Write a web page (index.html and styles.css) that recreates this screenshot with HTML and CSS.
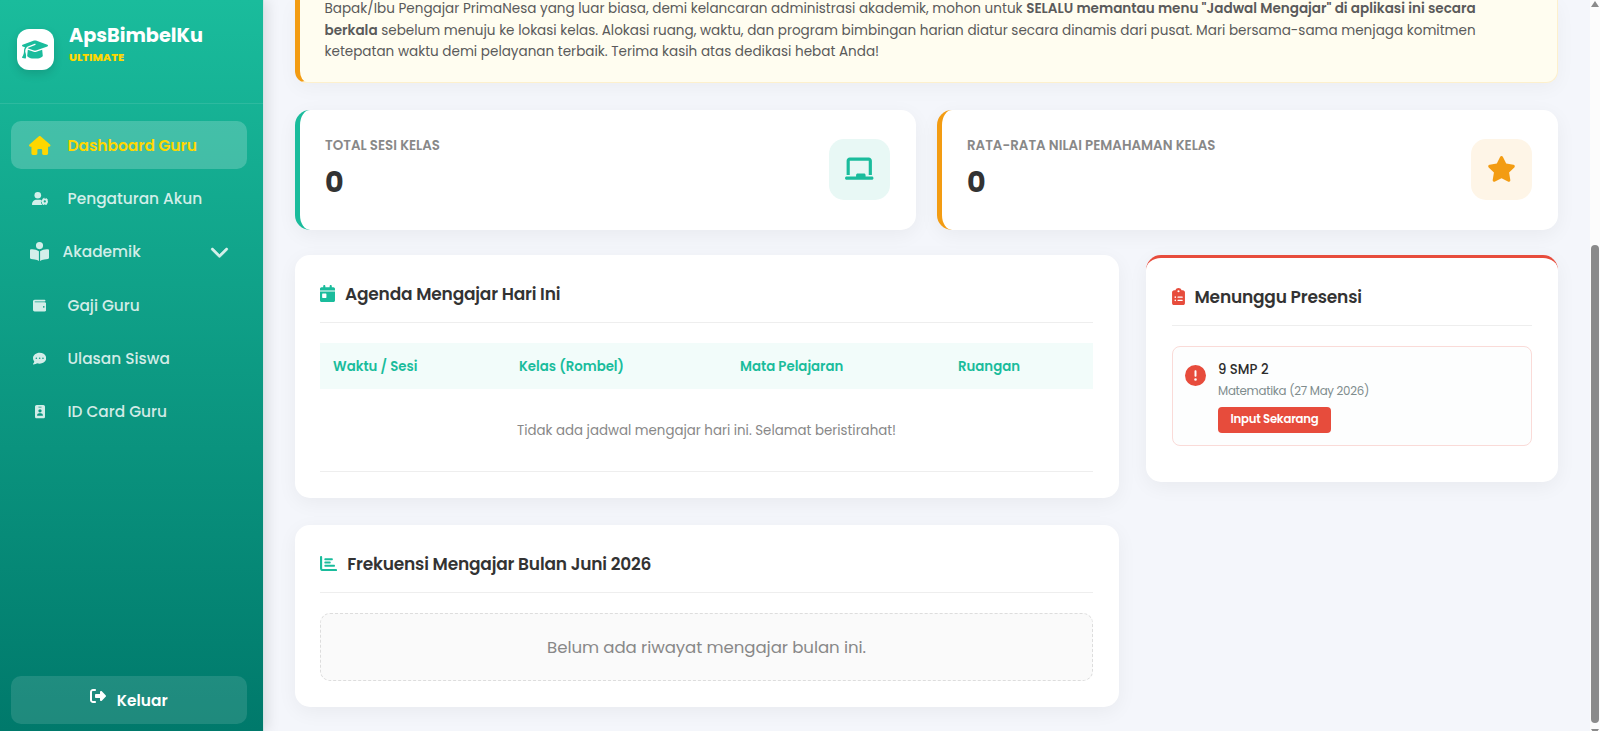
FILE: index.html
```
<!DOCTYPE html>
<html lang="id">
<head>
<meta charset="utf-8">
<title>Dashboard Guru - ApsBimbelKu</title>
<link rel="stylesheet" href="styles.css">
</head>
<body>
<div class="app">
  <aside class="sidebar">
    <div class="brand">
      <div class="brand-logo"><svg viewBox="0 0 640 512"><path d="M320 32c-8.1 0-16.1 1.4-23.7 4.1L15.8 137.4C6.3 140.9 0 149.9 0 160s6.3 19.1 15.8 22.6l57.9 20.9C57.3 229.3 48 259.8 48 291.9v28.1c0 28.4-10.8 57.7-22.3 80.8c-6.5 13-13.9 25.8-22.5 37.6C0 442.7-.9 448.3 .9 453.4s6 8.9 11.2 10.2l64 16c4.2 1.1 8.7 .3 12.4-2s6.3-6.1 7.1-10.4c8.6-42.8 4.3-81.2-2.1-108.7C90.3 344.3 86 329.8 80 316.5V291.9c0-30.2 10.2-58.7 27.9-81.5c12.9-15.5 29.6-28 49.2-35.7l157-61.7c8.2-3.2 17.5 .8 20.7 9s-.8 17.5-9 20.7l-157 61.7c-12.4 4.9-23.3 12.4-32.2 21.6l159.6 57.6c7.6 2.7 15.6 4.1 23.7 4.1s16.1-1.4 23.7-4.1L624.2 182.6c9.5-3.4 15.8-12.5 15.8-22.6s-6.3-19.1-15.8-22.6L343.7 36.1C336.1 33.4 328.1 32 320 32zM128 408c0 35.3 86 72 192 72s192-36.7 192-72L496.7 262.6 354.5 314c-11.1 4-22.8 6-34.5 6s-23.5-2-34.5-6L143.3 262.6 128 408z"/></svg></div>
      <div class="brand-text">
        <div class="brand-name">ApsBimbelKu</div>
        <div class="brand-tier">ULTIMATE</div>
      </div>
    </div>
    <nav class="menu">
      <a class="menu-item active"><span class="menu-icon"><svg class="i-home" viewBox="0 0 576 512"><path d="M575.8 255.5c0 18-15 32.1-32 32.1h-32l.7 160.2c0 2.7-.2 5.4-.5 8.1V472c0 22.1-17.9 40-40 40H456c-1.1 0-2.2 0-3.3-.1c-1.4 .1-2.8 .1-4.2 .1H416 392c-22.1 0-40-17.9-40-40V448 384c0-17.7-14.3-32-32-32H256c-17.7 0-32 14.3-32 32v64 24c0 22.1-17.9 40-40 40H160 128.1c-1.5 0-3-.1-4.5-.2c-1.2 .1-2.4 .2-3.6 .2H104c-22.1 0-40-17.9-40-40V360c0-.9 0-1.9 .1-2.8V287.6H32c-18 0-32-14-32-32.1c0-9 3-17 10-24L266.4 8c7-7 15-8 22-8s15 2 21 7L564.8 231.5c8 7 12 15 11 24z"/></svg></span><span>Dashboard Guru</span></a>
      <a class="menu-item"><span class="menu-icon"><svg class="i-user" viewBox="0 0 640 512"><circle cx="224" cy="128" r="128"/><path d="M178 304C80 304 0 384 0 482c0 17 13 30 30 30h390c-42-28-70-72-74-122-4-32 2-58 14-78-28-6-58-8-90-8z"/><circle cx="496" cy="368" r="82" fill="none" stroke="currentColor" stroke-width="76"/><circle cx="496" cy="368" r="128" fill="none" stroke="currentColor" stroke-width="34" stroke-dasharray="74 60" stroke-dashoffset="37"/></svg></span><span>Pengaturan Akun</span></a>
      <a class="menu-item group"><span class="menu-icon"><svg class="i-book" viewBox="0 0 512 512"><path d="M160 96a96 96 0 1 1 192 0A96 96 0 1 1 160 96zm80 152V512l-48.4-24.2c-20.9-10.4-43.5-17-66.8-19.3l-96-9.6C12.5 457.2 0 443.5 0 427V224c0-17.7 14.3-32 32-32H62.3c63.6 0 125.6 19.6 177.7 56zm32 264V248c52.1-36.4 114.1-56 177.7-56H480c17.7 0 32 14.3 32 32V427c0 16.4-12.5 30.2-28.8 31.8l-96 9.6c-23.2 2.3-45.9 8.9-66.8 19.3L272 512z"/></svg></span><span>Akademik</span><svg class="i-chevron" viewBox="0 0 512 512"><path d="M233.4 406.6c12.5 12.5 32.8 12.5 45.3 0l192-192c12.5-12.5 12.5-32.8 0-45.3s-32.8-12.5-45.3 0L256 338.7 86.6 169.4c-12.5-12.5-32.8-12.5-45.3 0s-12.5 32.8 0 45.3l192 192z"/></svg></a>
      <a class="menu-item"><span class="menu-icon"><svg class="i-small" viewBox="0 0 512 512"><path d="M64 32C28.7 32 0 60.7 0 96V416c0 35.3 28.7 64 64 64H448c35.3 0 64-28.7 64-64V192c0-35.3-28.7-64-64-64H80c-8.8 0-16-7.2-16-16s7.2-16 16-16H448c17.7 0 32-14.3 32-32s-14.3-32-32-32H64zM416 272a32 32 0 1 1 0 64 32 32 0 1 1 0-64z"/></svg></span><span>Gaji Guru</span></a>
      <a class="menu-item"><span class="menu-icon"><svg class="i-small" viewBox="0 0 512 512"><path d="M256 448c141.4 0 256-93.1 256-208S397.4 32 256 32S0 125.1 0 240c0 45.1 17.7 86.8 47.7 120.9c-1.9 24.5-11.4 46.3-21.4 62.9c-5.5 9.2-11.1 16.6-15.2 21.6c-2.1 2.5-3.7 4.4-4.9 5.7l-1.6 1.7c-4.6 4.6-5.9 11.4-3.4 17.4c2.5 6 8.3 9.9 14.8 9.9c28.7 0 57.6-8.9 81.6-19.3c22.9-10 42.4-21.9 54.3-30.6c31.8 11.5 67 17.9 104.1 17.9zM128 208a32 32 0 1 1 0 64 32 32 0 1 1 0-64zm128 0a32 32 0 1 1 0 64 32 32 0 1 1 0-64zm96 32a32 32 0 1 1 64 0 32 32 0 1 1 -64 0z"/></svg></span><span>Ulasan Siswa</span></a>
      <a class="menu-item"><span class="menu-icon"><svg class="i-badge" viewBox="0 0 384 512"><path d="M64 0C28.7 0 0 28.7 0 64V448c0 35.3 28.7 64 64 64H320c35.3 0 64-28.7 64-64V64c0-35.3-28.7-64-64-64H64zm96 320h64c44.2 0 80 35.8 80 80c0 8.8-7.2 16-16 16H96c-8.8 0-16-7.2-16-16c0-44.2 35.8-80 80-80zm-32-96a64 64 0 1 1 128 0 64 64 0 1 1 -128 0zM144 64h96c8.8 0 16 7.2 16 16s-7.2 16-16 16H144c-8.8 0-16-7.2-16-16s7.2-16 16-16z"/></svg></span><span>ID Card Guru</span></a>
    </nav>
    <a class="logout"><svg viewBox="0 0 512 512"><path d="M377.9 105.9L500.7 228.7c7.2 7.2 11.3 17.1 11.3 27.3s-4.1 20.1-11.3 27.3L377.9 406.1c-6.4 6.4-15 9.9-24 9.9c-18.7 0-33.9-15.2-33.9-33.9l0-62.1-128 0c-17.7 0-32-14.3-32-32l0-64c0-17.7 14.3-32 32-32l128 0 0-62.1c0-18.7 15.2-33.9 33.9-33.9c9 0 17.6 3.6 24 9.9zM160 96L96 96c-17.7 0-32 14.3-32 32l0 256c0 17.7 14.3 32 32 32l64 0c17.7 0 32 14.3 32 32s-14.3 32-32 32l-64 0c-53 0-96-43-96-96L0 128C0 75 43 32 96 32l64 0c17.7 0 32 14.3 32 32s-14.3 32-32 32z"/></svg><span>Keluar</span></a>
  </aside>

  <main class="content">
    <section class="notice">
      <div class="notice-line">Bapak/Ibu Pengajar PrimaNesa yang luar biasa, demi kelancaran administrasi akademik, mohon untuk <b>SELALU memantau menu "Jadwal Mengajar" di aplikasi ini secara</b></div>
      <div class="notice-line"><b>berkala</b> sebelum menuju ke lokasi kelas. Alokasi ruang, waktu, dan program bimbingan harian diatur secara dinamis dari pusat. Mari bersama-sama menjaga komitmen</div>
      <div class="notice-line">ketepatan waktu demi pelayanan terbaik. Terima kasih atas dedikasi hebat Anda!</div>
    </section>

    <section class="stats">
      <div class="stat stat-green">
        <div class="stat-body">
          <div class="stat-label">TOTAL SESI KELAS</div>
          <div class="stat-value">0</div>
        </div>
        <div class="stat-icon"><svg class="i-board" viewBox="0 0 576 512"><path d="M96 32C60.7 32 32 60.7 32 96V384H96V96l384 0V384h64V96c0-35.3-28.7-64-64-64H96zM224 384v32H32c-17.7 0-32 14.3-32 32s14.3 32 32 32H544c17.7 0 32-14.3 32-32s-14.3-32-32-32H416V384c0-17.7-14.3-32-32-32H256c-17.7 0-32 14.3-32 32z"/></svg></div>
      </div>
      <div class="stat stat-orange">
        <div class="stat-body">
          <div class="stat-label">RATA-RATA NILAI PEMAHAMAN KELAS</div>
          <div class="stat-value">0</div>
        </div>
        <div class="stat-icon"><svg class="i-star" viewBox="0 0 576 512"><path d="M316.9 18C311.6 7 300.4 0 288.1 0s-23.4 7-28.8 18L195 150.3 51.4 171.5c-12 1.8-22 10.2-25.7 21.7s-.7 24.2 7.9 32.7L137.8 329 113.2 474.7c-2 12 3 24.2 12.9 31.3s23 8 33.8 2.3l128.3-68.5 128.3 68.5c10.8 5.7 23.9 4.9 33.8-2.3s14.9-19.3 12.9-31.3L438.5 329 542.7 225.9c8.6-8.5 11.7-21.2 7.9-32.7s-13.7-19.9-25.7-21.7L381.2 150.3 316.9 18z"/></svg></div>
      </div>
    </section>

    <div class="columns">
      <div class="col">
        <section class="card card-agenda">
          <h2 class="card-title"><svg class="i-cal" viewBox="0 0 448 512"><path d="M128 0c17.7 0 32 14.3 32 32V64H288V32c0-17.7 14.3-32 32-32s32 14.3 32 32V64h48c26.5 0 48 21.5 48 48v48H0V112C0 85.5 21.5 64 48 64H96V32c0-17.7 14.3-32 32-32zM0 192H448V464c0 26.5-21.5 48-48 48H48c-26.5 0-48-21.5-48-48V192zm80 64c-8.8 0-16 7.2-16 16v96c0 8.8 7.2 16 16 16h96c8.8 0 16-7.2 16-16V272c0-8.8-7.2-16-16-16H80z"/></svg><span>Agenda Mengajar Hari Ini</span></h2>
          <div class="table">
            <div class="thead"><span>Waktu / Sesi</span><span>Kelas (Rombel)</span><span>Mata Pelajaran</span><span>Ruangan</span></div>
            <div class="trow">Tidak ada jadwal mengajar hari ini. Selamat beristirahat!</div>
          </div>
        </section>
        <section class="card card-freq">
          <h2 class="card-title"><svg class="i-chart" viewBox="0 0 512 512"><path d="M32 32c17.7 0 32 14.3 32 32V400c0 8.8 7.2 16 16 16H480c17.7 0 32 14.3 32 32s-14.3 32-32 32H80c-44.2 0-80-35.8-80-80V64C0 46.3 14.3 32 32 32zm96 96c0-17.7 14.3-32 32-32l192 0c17.7 0 32 14.3 32 32s-14.3 32-32 32l-192 0c-17.7 0-32-14.3-32-32zm32 64H288c17.7 0 32 14.3 32 32s-14.3 32-32 32H160c-17.7 0-32-14.3-32-32s14.3-32 32-32zm0 96H416c17.7 0 32 14.3 32 32s-14.3 32-32 32H160c-17.7 0-32-14.3-32-32s14.3-32 32-32z"/></svg><span>Frekuensi Mengajar Bulan Juni 2026</span></h2>
          <div class="empty">Belum ada riwayat mengajar bulan ini.</div>
        </section>
      </div>
      <section class="card card-presensi">
        <h2 class="card-title"><svg class="i-clip" viewBox="0 0 384 512"><path d="M192 0c-41.8 0-77.4 26.7-90.5 64H64C28.7 64 0 92.7 0 128V448c0 35.3 28.7 64 64 64H320c35.3 0 64-28.7 64-64V128c0-35.3-28.7-64-64-64H282.5C269.4 26.7 233.8 0 192 0zm0 64a32 32 0 1 1 0 64 32 32 0 1 1 0-64zM72 272a24 24 0 1 1 48 0 24 24 0 1 1 -48 0zm104-16H304c8.8 0 16 7.2 16 16s-7.2 16-16 16H176c-8.8 0-16-7.2-16-16s7.2-16 16-16zM72 368a24 24 0 1 1 48 0 24 24 0 1 1 -48 0zm88 0c0-8.8 7.2-16 16-16H304c8.8 0 16 7.2 16 16s-7.2 16-16 16H176c-8.8 0-16-7.2-16-16z"/></svg><span>Menunggu Presensi</span></h2>
        <div class="pending">
          <svg class="i-alert" viewBox="0 0 512 512"><path d="M256 512A256 256 0 1 0 256 0a256 256 0 1 0 0 512zm0-384c13.3 0 24 10.7 24 24V264c0 13.3-10.7 24-24 24s-24-10.7-24-24V152c0-13.3 10.7-24 24-24zM224 352a32 32 0 1 1 64 0 32 32 0 1 1 -64 0z"/></svg>
          <div class="pending-body">
            <div class="pending-class">9 SMP 2</div>
            <div class="pending-subject">Matematika (27 May 2026)</div>
            <a class="pending-btn">Input Sekarang</a>
          </div>
        </div>
      </section>
    </div>
  </main>

  <div class="scrollbar">
    <i class="arrow-up"></i>
    <i class="thumb"></i>
    <i class="arrow-down"></i>
  </div>
</div>
</body>
</html>
```
FILE: styles.css
```
* { box-sizing: border-box; }
body { margin: 0; background: #f4f6fb; font-family: Poppins, Inter, "Open Sans", sans-serif; color: #2d2d2d; overflow: hidden; }
svg { display: block; fill: currentColor; flex: none; }
.app { display: flex; height: 731px; overflow: hidden; }

/* Sidebar */
.sidebar { width: 264px; flex: none; display: flex; flex-direction: column; color: rgba(255,255,255,.82); background: linear-gradient(180deg, #1abc9c 0%, #00796b 100%); border-right: 1px solid #d5e3e3; box-shadow: 4px 0 12px rgba(0,0,0,.1); position: relative; }
.brand { height: 104px; display: flex; gap: 15.5px; padding: 24px 0 0 16.5px; border-bottom: 1px solid rgba(255,255,255,.1); }
.brand-logo { width: 37px; height: 41px; margin-top: 5px; border-radius: 12px; background: #fff; color: #1abc9c; display: flex; align-items: center; justify-content: center; box-shadow: 0 4px 10px rgba(0,0,0,.13); }
.brand-logo svg { width: 26px; height: 21px; }
.brand-name { color: #fff; font-size: 19.3px; font-weight: 700; line-height: 24.5px; white-space: nowrap; }
.brand-tier { color: #ffd700; font-size: 11.1px; font-weight: 800; line-height: 16px; }
.menu { padding: 17px 16px 0 11px; display: flex; flex-direction: column; gap: 5.4px; flex: 1; }
.menu-item { height: 48px; border-radius: 10px; display: flex; align-items: center; gap: 17px; padding: 0 18px; font-size: 15.4px; font-weight: 500; white-space: nowrap; }
.menu-item.active { background: rgba(255,255,255,.2); color: #ffd700; font-weight: 600; }
.menu-item.group { gap: 12px; }
.menu-icon { width: 21.5px; display: flex; justify-content: center; }
.i-home { width: 21.5px; height: 19px; }
.i-user { width: 16.5px; height: 13.2px; }
.i-book { width: 19px; height: 19px; }
.i-small { width: 13.3px; height: 13.3px; }
.i-badge { width: 10px; height: 13.3px; }
.i-chevron { width: 19px; height: 19px; margin-left: auto; stroke: currentColor; stroke-width: 14px; }
.logout { height: 48px; margin: 0 16px 7px 11px; border-radius: 10px; background: rgba(255,255,255,.12); color: #fff; display: flex; align-items: center; justify-content: center; gap: 10.5px; font-size: 15.4px; font-weight: 600; }
.logout svg { width: 16px; height: 16px; margin-top: -8px; }

/* Main content */
.content { flex: 1; min-width: 0; padding: 0 32px 0 30.5px; }
.notice { display: flow-root; height: 83px; margin-bottom: 26.5px; padding: 0 24px 0 25px; background: #fffdf0; border: 1px solid #fdf0cd; border-top: 0; border-left: 5px solid #f39c12; border-radius: 0 0 12px 12px; box-shadow: 0 5px 20px rgba(0,0,0,.04); color: #5a5a5a; font-size: 13.56px; }
.notice-line { height: 21.7px; line-height: 21.7px; white-space: nowrap; }
.notice-line:first-child { margin-top: -2px; }
.notice b { font-weight: 600; }
.stats { display: grid; grid-template-columns: 1fr 1fr; gap: 20.5px; margin-bottom: 25.5px; }
.stat { height: 120px; background: #fff; border-left: 5px solid; border-radius: 15px; display: flex; align-items: center; justify-content: space-between; padding: 0 26px 0 25.5px; box-shadow: 0 5px 20px rgba(0,0,0,.05); }
.stat-green { border-color: #1abc9c; }
.stat-orange { border-color: #f39c12; }
.stat-label { color: #888; font-size: 13.38px; font-weight: 600; line-height: 20px; }
.stat-value { color: #333; font-size: 28.6px; font-weight: 700; line-height: 44px; margin-top: 4px; }
.stat-icon { width: 61.5px; height: 61.5px; border-radius: 15px; display: flex; align-items: center; justify-content: center; }
.stat-green .stat-icon { background: #e8f8f5; color: #1abc9c; }
.stat-orange .stat-icon { background: #fef5e7; color: #f39c12; }
.i-board { width: 28.5px; height: 25.3px; margin-bottom: 1px; }
.i-star { width: 29px; height: 25.8px; margin-bottom: 1px; }

.columns { display: grid; grid-template-columns: 824px 412px; justify-content: space-between; align-items: start; }
.col { display: flex; flex-direction: column; gap: 27px; }
.card { background: #fff; border-radius: 15px; padding: 0 25.5px; box-shadow: 0 5px 20px rgba(0,0,0,.05); }
.card-agenda { height: 243px; }
.card-freq { height: 182px; }
.card-presensi { height: 227px; padding-right: 26.5px; border-top: 3.5px solid #e74c3c; }
.card-title { height: 68px; margin: 0 0 20px; padding-top: 10.5px; border-bottom: 1px solid #eee; display: flex; align-items: center; color: #333; font-size: 17px; font-weight: 600; letter-spacing: -.19px; white-space: nowrap; }
.card-title svg { color: #1abc9c; margin-right: 10px; }
.i-cal { width: 15px; height: 17.2px; }
.i-chart { width: 17.2px; height: 17.2px; }
.card-presensi .card-title svg { color: #e74c3c; }
.i-clip { width: 13px; height: 17.2px; }
.thead { height: 45.5px; display: grid; grid-template-columns: 186px 221px 218px 1fr; align-items: center; padding: 1.5px 0 0 13px; background: #f2fcfa; color: #1abc9c; font-size: 13.32px; font-weight: 600; }
.trow { height: 83.5px; display: flex; align-items: center; justify-content: center; padding-top: 2px; border-bottom: 1px solid #eee; color: #888; font-size: 13.36px; }
.empty { height: 68px; display: flex; align-items: center; justify-content: center; border: 1px dashed #ddd; border-radius: 10px; background: #fafafa; color: #888; font-size: 16.6px; letter-spacing: -.08px; }
.pending { height: 100px; display: flex; gap: 12.5px; padding: 13px 12px; border: 1px solid #fadbd8; border-radius: 8px; background: #fdfefe; }
.i-alert { width: 21px; height: 21px; margin-top: 5px; color: #e74c3c; }
.pending-class { font-size: 13.25px; font-weight: 500; line-height: 20px; }
.pending-subject { color: #7f8c8d; font-size: 11.8px; line-height: 18px; margin-top: 2px; letter-spacing: -.28px; }
.pending-btn { display: block; width: 113px; height: 25.5px; margin-top: 7px; text-align: center; border-radius: 4px; background: #e74c3c; color: #fff; font-size: 11.7px; font-weight: 600; line-height: 25px; letter-spacing: -.24px; }

/* Scrollbar */
.scrollbar { width: 10px; flex: none; background: #fcfcfc; display: flex; flex-direction: column; align-items: center; overflow: hidden; }
.arrow-up { margin-top: 1px; border: 4px solid transparent; border-top: 0; border-bottom: 6px solid #8b8b8b; }
.thumb { width: 8px; height: 478px; margin-top: 238px; border-radius: 4px; background: #8b8b8b; flex: none; }
.arrow-down { margin-top: 6px; border: 4px solid transparent; border-bottom: 0; border-top: 6px solid #8b8b8b; }
```
